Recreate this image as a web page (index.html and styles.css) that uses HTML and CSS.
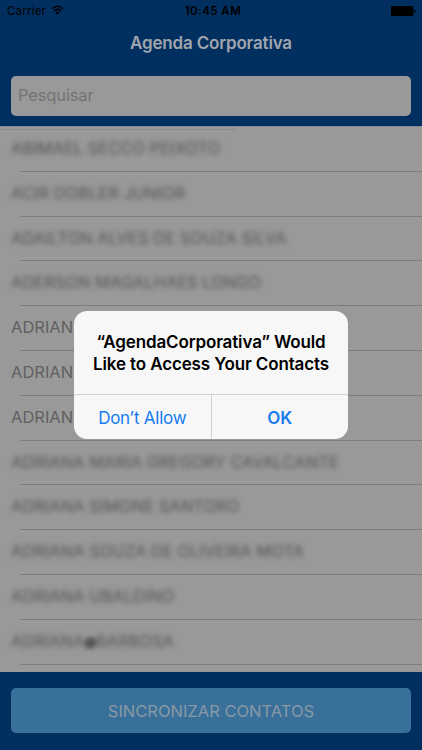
FILE: index.html
```
<!DOCTYPE html>
<html lang="pt-BR">
<head>
  <meta charset="UTF-8" />
  <meta name="viewport" content="width=device-width, initial-scale=1.0"/>
  <title>Agenda Corporativa</title>
  <link rel="stylesheet" href="styles.css">
</head>
<body>

  <div class="app">
    <header>
      <div class="status-bar">
        <div class="carrier">
          <span>Carrier</span>
          <svg class="wifi" viewBox="0 0 13 10" width="13" height="10">
            <path d="M0.9 3.7 Q6.5 -1.1 12.1 3.7" fill="none" stroke="#000" stroke-width="1.5"/>
            <path d="M2.9 5.9 Q6.5 2.8 10.1 5.9" fill="none" stroke="#000" stroke-width="1.5"/>
            <path d="M4.4 7.4 Q6.5 5.6 8.6 7.4 L6.5 9.5 Z" fill="#000"/>
          </svg>
        </div>
        <span class="time">10:45 AM</span>
        <div class="battery">
          <svg viewBox="0 0 25 10" width="25" height="10">
            <rect x="0" y="0" width="22.3" height="10" rx="1"/>
            <path d="M23 3.2 Q24.6 3.6 24.6 5 Q24.6 6.4 23 6.8 Z"/>
          </svg>
        </div>
      </div>
      <h1>Agenda Corporativa</h1>
      <div class="search">Pesquisar</div>
    </header>

    <ul class="contacts">
      <li class="hidden">ABIMAEL SECCO PEIXOTO</li>
      <li class="hidden">ACIR DOBLER JUNIOR</li>
      <li class="hidden">ADAILTON ALVES DE SOUZA SILVA</li>
      <li class="hidden">ADERSON MAGALHAES LONGO</li>
      <li>ADRIAN</li>
      <li>ADRIAN</li>
      <li>ADRIAN</li>
      <li class="hidden">ADRIANA MARIA GREGORY CAVALCANTE</li>
      <li class="hidden">ADRIANA SIMONE SANTORO</li>
      <li class="hidden">ADRIANA SOUZA DE OLIVEIRA MOTA</li>
      <li class="hidden">ADRIANA UBALDINO</li>
      <li class="hidden">ADRIANA<b>@</b>BARBOSA</li>
    </ul>

    <footer>
      <div class="sync">SINCRONIZAR CONTATOS</div>
    </footer>
  </div>

  <div class="alert">
    <p>“AgendaCorporativa” Would<br><span>Like to Access Your Contacts</span></p>
    <div class="actions">
      <div class="deny">Don’t Allow</div>
      <div class="ok">OK</div>
    </div>
  </div>

</body>
</html>
```
FILE: styles.css
```
* { box-sizing: border-box; }
body {
  margin: 0;
  width: 422px;
  height: 750px;
  overflow: hidden;
  position: relative;
  font-family: Inter, "Liberation Sans", sans-serif;
}
.app {
  height: 750px;
  display: flex;
  flex-direction: column;
  background: #002f60;
}
header { height: 126px; }
.status-bar {
  height: 22px;
  padding: 0 6px 0 7px;
  display: grid;
  grid-template-columns: 1fr auto 1fr;
  align-items: center;
  font-size: 11.5px;
  line-height: 22px;
  color: #000;
}
.carrier { display: flex; align-items: center; gap: 5px; letter-spacing: 0.2px; }
.wifi { position: relative; top: -1px; }
.time { padding-left: 3px; font-weight: 600; letter-spacing: 0.45px; }
.battery { display: flex; justify-content: flex-end; }
h1 {
  margin: 0;
  height: 43px;
  line-height: 43px;
  text-align: center;
  font-size: 17px;
  font-weight: 600;
  letter-spacing: -0.17px;
  color: #a0a5ad;
}
.search {
  margin: 11px 11px 0;
  height: 40px;
  padding-left: 7px;
  line-height: 39px;
  border-radius: 5px;
  background: #999;
  font-size: 16.5px;
  letter-spacing: -0.15px;
  color: #737375;
}
.contacts {
  list-style: none;
  margin: 0;
  padding: 0;
  height: 546px;
  overflow: hidden;
  background: linear-gradient(#868a93, #868a93) 0 2px / 236px 1px no-repeat #999;
  border-top: 1px solid #858c98;
}
.contacts li {
  height: 44.8px;
  padding-left: 11px;
  line-height: 43px;
  font-size: 16.5px;
  color: #616161;
  white-space: nowrap;
  background: linear-gradient(#7d7d7d, #7d7d7d) 20px 100% / 100% 1px no-repeat;
}
.contacts .hidden {
  color: transparent;
  text-shadow: 0 0 5px #555;
}
.hidden b {
  font-size: 12px;
  letter-spacing: -1px;
  text-shadow: 0 -1px 4px #222;
}
footer { padding: 16px 11px; }
.sync {
  height: 45px;
  line-height: 46px;
  border-radius: 5px;
  background: #387099;
  text-align: center;
  font-size: 16.5px;
  color: #8999a5;
}
.alert {
  position: absolute;
  left: 74px;
  top: 311px;
  width: 274px;
  height: 128px;
  border-radius: 13px;
  background: #f7f7f7;
  text-align: center;
  font-size: 17px;
}
.alert p {
  margin: 0;
  height: 83px;
  padding-top: 20px;
  line-height: 22px;
  font-weight: 600;
  letter-spacing: -0.13px;
  color: #000;
  white-space: nowrap;
}
.actions {
  display: flex;
  height: 45px;
  line-height: 46px;
  border-top: 1px solid #d2d2d4;
  color: #157cf0;
}
.actions div { flex: 1; }
.actions .deny { border-right: 1px solid #d2d2d4; letter-spacing: -0.25px; }
.actions .ok { font-weight: 600; }
```
